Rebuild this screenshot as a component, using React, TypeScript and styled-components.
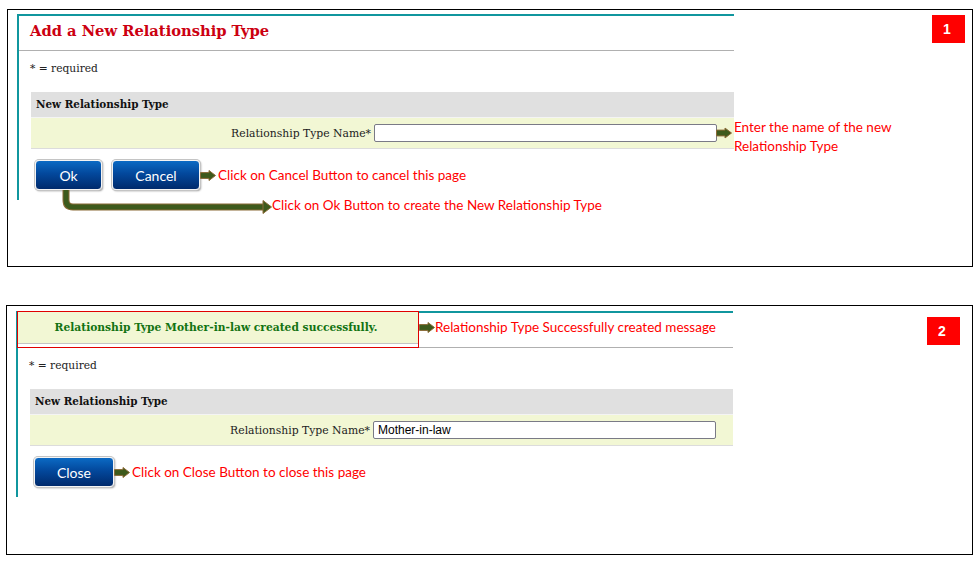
import React from 'react';
import styled, { createGlobalStyle } from 'styled-components';

const Global = createGlobalStyle`
  html, body { margin: 0; padding: 0; background: #ffffff; }
  body { font-family: "DejaVu Serif", serif; }
  * { box-sizing: border-box; }
`;

const Page = styled.div`
  width: 979px;
  height: 563px;
  padding-top: 9px;
  display: flex;
  flex-direction: column;
  overflow: hidden;
`;

const Panel = styled.section<{ $left: number; $top: number; $width: number; $height: number }>`
  margin-left: ${p => p.$left}px;
  margin-top: ${p => p.$top}px;
  width: ${p => p.$width}px;
  height: ${p => p.$height}px;
  border: 1px solid #000;
  display: flex;
  align-items: flex-start;
  flex-shrink: 0;
`;

const Frame = styled.div<{ $top: number }>`
  position: relative;
  margin: ${p => p.$top}px 0 0 9px;
  width: 717px;
  height: 186px;
  border-left: 2px solid #10969e;
  border-top: 2px solid #10969e;
  display: flex;
  flex-direction: column;
`;

const TitleBar = styled.div`
  height: 35px;
  border-bottom: 1px solid #b0b0b0;
  display: flex;
  align-items: flex-start;
`;

const Title = styled.h1`
  margin: 0;
  padding: 5px 0 0 11px;
  line-height: 20px;
  font-family: "DejaVu Serif", serif;
  font-size: 14.7px;
  font-weight: bold;
  color: #cc0011;
`;

const MessageBox = styled.div`
  align-self: flex-start;
  margin: -2px 0 0 -1px;
  width: 402px;
  height: 37px;
  border: 1px solid #e00000;
  background: #ffffff;
  padding-bottom: 3px;
  position: relative;
  z-index: 1;
`;

const MessageInner = styled.div`
  height: 32px;
  background: #f2f7d4;
  border-bottom: 1px solid #c4c4c4;
  display: flex;
  align-items: center;
  justify-content: center;
  padding-right: 4px;
  font-family: "DejaVu Serif", serif;
  font-size: 10.7px;
  font-weight: bold;
  color: #127312;
`;

const Required = styled.div`
  margin: 11px 0 0 11px;
  line-height: 13px;
  font-size: 10.7px;
  color: #222;
`;

const SectionHead = styled.div`
  margin: 17px 0 0 12px;
  height: 25px;
  line-height: 25px;
  padding-left: 5px;
  background: #e0e0e0;
  font-size: 10.4px;
  font-weight: bold;
  color: #111;
`;

const FieldRow = styled.div`
  position: relative;
  margin-left: 12px;
  height: 32px;
  background: #f2f7d4;
  border-top: 1px solid #f4f4f4;
  border-bottom: 1px solid #dcdcdc;
  display: flex;
  align-items: center;
  padding-right: 17px;
`;

const FieldLabel = styled.label`
  flex: 1;
  text-align: right;
  padding-right: 3px;
  font-size: 10.8px;
  color: #222;
  white-space: nowrap;
`;

const TextInput = styled.input`
  width: 343px;
  height: 18px;
  border: 1px solid #7a7a86;
  border-radius: 2px;
  background: #fff;
  padding: 0 4px;
  font-family: "Liberation Sans", Arial, sans-serif;
  font-size: 12px;
  color: #000;
  outline: none;
`;

const ButtonRow = styled.div`
  position: relative;
  margin: 11px 0 0 16px;
  display: flex;
  align-items: center;
`;

const Button = styled.button<{ $width: number }>`
  width: ${p => p.$width}px;
  height: 30px;
  margin-right: 10px;
  border: 1px solid #f4f4f4;
  border-radius: 4px;
  box-shadow: 0 0 0 1px #c4c4c4, 1px 1px 2px rgba(0, 0, 0, 0.45);
  background: linear-gradient(180deg, #0b6ac4 0%, #03489c 45%, #002a6c 100%);
  color: #ffffff;
  font-family: Lato, "Liberation Sans", sans-serif;
  font-size: 14px;
  padding: 0;
  cursor: pointer;
  &:last-of-type { margin-right: 0; }
`;

const Note = styled.span`
  font-family: Lato, "Liberation Sans", sans-serif;
  font-size: 13.5px;
  line-height: 19px;
  color: #ff0000;
  white-space: nowrap;
`;

const InlineNote = styled.div<{ $gap: number; $dy?: number }>`
  display: flex;
  align-items: center;
  gap: ${p => p.$gap}px;
  margin-top: ${p => p.$dy ?? 0}px;
  align-self: ${p => (p.$dy !== undefined ? 'flex-start' : 'center')};
`;

const SideNote = styled(Note)`
  position: absolute;
  left: 100%;
  top: 0;
  white-space: normal;
  width: 200px;
`;

const InputArrow = styled.span`
  position: absolute;
  right: 2px;
  top: 50%;
  transform: translateY(-50%);
  display: flex;
`;

const ElbowCallout = styled.div`
  position: absolute;
  left: 27px;
  top: 100%;
  display: flex;
  align-items: flex-start;
`;

const ElbowNote = styled(Note)`
  margin-top: 6px;
  margin-left: -2px;
`;

const Badge = styled.div<{ $top: number; $right: number }>`
  margin: ${p => p.$top}px ${p => p.$right}px 0 auto;
  width: 33px;
  height: 28px;
  background: #ff0000;
  color: #ffffff;
  display: flex;
  align-items: center;
  justify-content: center;
  padding-right: 3px;
  font-family: "Liberation Sans", Arial, sans-serif;
  font-weight: bold;
  font-size: 14px;
`;

const ARROW_FILL = '#3d5a1c';
const ARROW_EDGE = '#8a6a36';

const Arrow = () => (
  <svg width="16" height="11" viewBox="0 0 16 11" style={{ display: 'block', flexShrink: 0 }}>
    <path
      d="M0.5 2.6 H9 V0.5 L15.5 5.5 L9 10.5 V8.4 H0.5 Z"
      fill={ARROW_FILL}
      stroke={ARROW_EDGE}
      strokeWidth="1"
    />
  </svg>
);

const Elbow = () => (
  <svg width="212" height="26" viewBox="0 0 212 26" style={{ display: 'block' }}>
    <path d="M4 0 V10 Q4 17 11 17 H203" fill="none" stroke={ARROW_EDGE} strokeWidth="7" />
    <path d="M4 0 V10 Q4 17 11 17 H203" fill="none" stroke={ARROW_FILL} strokeWidth="5" />
    <path d="M201 10.5 L209.5 17 L201 23.5 Z" fill={ARROW_FILL} stroke={ARROW_EDGE} strokeWidth="1" />
  </svg>
);

export default function App() {
  return (
    <>
      <Global />
      <Page>
        <Panel $left={7} $top={0} $width={966} $height={258}>
          <Frame $top={4}>
            <TitleBar>
              <Title>Add a New Relationship Type</Title>
            </TitleBar>
            <Required>* = required</Required>
            <SectionHead>New Relationship Type</SectionHead>
            <FieldRow>
              <FieldLabel>Relationship Type Name*</FieldLabel>
              <TextInput readOnly defaultValue="" />
              <InputArrow>
                <Arrow />
              </InputArrow>
              <SideNote>Enter the name of the new Relationship Type</SideNote>
            </FieldRow>
            <ButtonRow>
              <Button $width={67}>Ok</Button>
              <Button $width={88}>Cancel</Button>
              <InlineNote $gap={2}>
                <Arrow />
                <Note>Click on Cancel Button to cancel this page</Note>
              </InlineNote>
              <ElbowCallout>
                <Elbow />
                <ElbowNote>Click on Ok Button to create the New Relationship Type</ElbowNote>
              </ElbowCallout>
            </ButtonRow>
          </Frame>
          <Badge $top={5} $right={7}>1</Badge>
        </Panel>

        <Panel $left={6} $top={38} $width={967} $height={250}>
          <Frame $top={5}>
            <TitleBar>
              <MessageBox>
                <MessageInner>Relationship Type Mother-in-law created successfully.</MessageInner>
              </MessageBox>
              <InlineNote $gap={0} $dy={5}>
                <Arrow />
                <Note>Relationship Type Successfully created message</Note>
              </InlineNote>
            </TitleBar>
            <Required>* = required</Required>
            <SectionHead>New Relationship Type</SectionHead>
            <FieldRow>
              <FieldLabel>Relationship Type Name*</FieldLabel>
              <TextInput readOnly defaultValue="Mother-in-law" />
            </FieldRow>
            <ButtonRow>
              <Button $width={80}>Close</Button>
              <InlineNote $gap={2}>
                <Arrow />
                <Note>Click on Close Button to close this page</Note>
              </InlineNote>
            </ButtonRow>
          </Frame>
          <Badge $top={11} $right={12}>2</Badge>
        </Panel>
      </Page>
    </>
  );
}
